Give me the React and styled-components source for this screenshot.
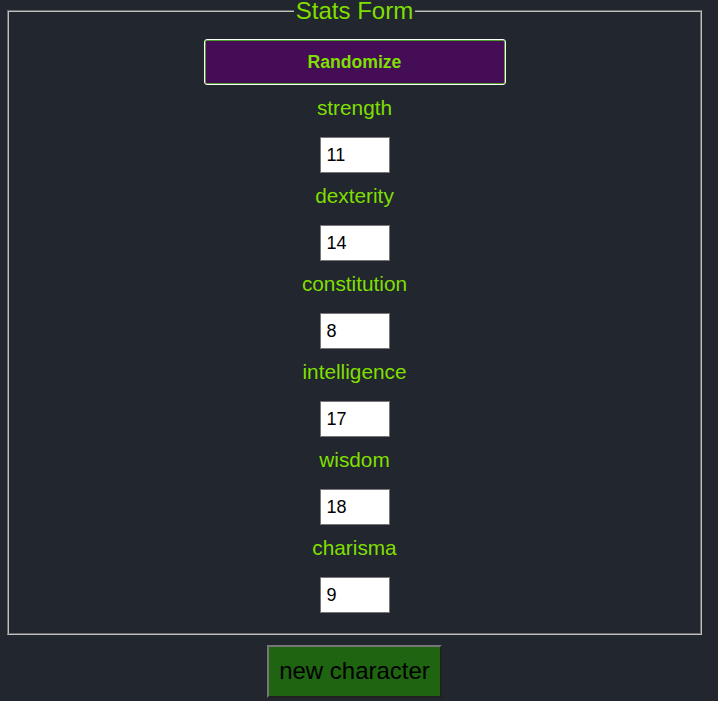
import React, { useState } from "react";
import styled, { createGlobalStyle } from "styled-components";

const Global = createGlobalStyle`
  html, body { margin: 0; padding: 0; background: #22262e; }
  body { font-family: "Liberation Sans", Arial, sans-serif; }
`;

const Page = styled.div`
  padding: 0 16px 0 7px;
  display: flex;
  flex-direction: column;
  align-items: center;
`;

const Fieldset = styled.fieldset`
  align-self: stretch;
  margin: 0;
  padding: 0 0 20px;
  border: 2px groove #c0c0c0;
  display: flex;
  flex-direction: column;
  align-items: center;
`;

const Legend = styled.legend`
  margin: 0 auto;
  padding: 0 2px;
  color: #7fdf00;
  font-size: 24px;
  line-height: 22px;
`;

const RandomButton = styled.button`
  margin-top: 17px;
  width: 302px;
  height: 46px;
  background: #450d56;
  color: #7fdf00;
  font-family: "Liberation Sans", Arial, sans-serif;
  font-weight: bold;
  font-size: 17.6px;
  border: 1px solid #ffffff;
  border-radius: 3px;
  box-shadow: inset 0 0 0 1px #4f9a2c;
  cursor: pointer;
`;

const Label = styled.label`
  margin-top: 11px;
  margin-bottom: 17px;
  line-height: 24px;
  font-size: 20.8px;
  color: #7fdf00;
`;

const NumInput = styled.input`
  box-sizing: border-box;
  width: 70px;
  height: 36px;
  padding: 0 6px;
  border: 1px solid #767676;
  background: #ffffff;
  color: #000;
  font-family: "Liberation Sans", Arial, sans-serif;
  font-size: 18px;
  outline: none;
`;

const NewButton = styled.button`
  margin-top: 10px;
  padding: 10px 10px 11px;
  background: #1f6410;
  color: #000;
  font-family: "Liberation Sans", Arial, sans-serif;
  font-size: 24px;
  border: 2px outset #767676;
  cursor: pointer;
`;

const initial = {
  strength: 11,
  dexterity: 14,
  constitution: 8,
  intelligence: 17,
  wisdom: 18,
  charisma: 9,
};

export default function App() {
  const [stats, setStats] = useState(initial);
  const roll = () => {
    const next = {};
    Object.keys(stats).forEach((k) => {
      next[k] = 3 + Math.floor(Math.random() * 16);
    });
    setStats(next);
  };
  return (
    <>
      <Global />
      <Page>
        <Fieldset>
          <Legend>Stats Form</Legend>
          <RandomButton type="button" onClick={roll}>Randomize</RandomButton>
          {Object.keys(stats).map((k) => (
            <React.Fragment key={k}>
              <Label htmlFor={k}>{k}</Label>
              <NumInput
                id={k}
                type="text"
                value={stats[k]}
                onChange={(e) => setStats({ ...stats, [k]: e.target.value })}
              />
            </React.Fragment>
          ))}
        </Fieldset>
        <NewButton type="button">new character</NewButton>
      </Page>
    </>
  );
}
